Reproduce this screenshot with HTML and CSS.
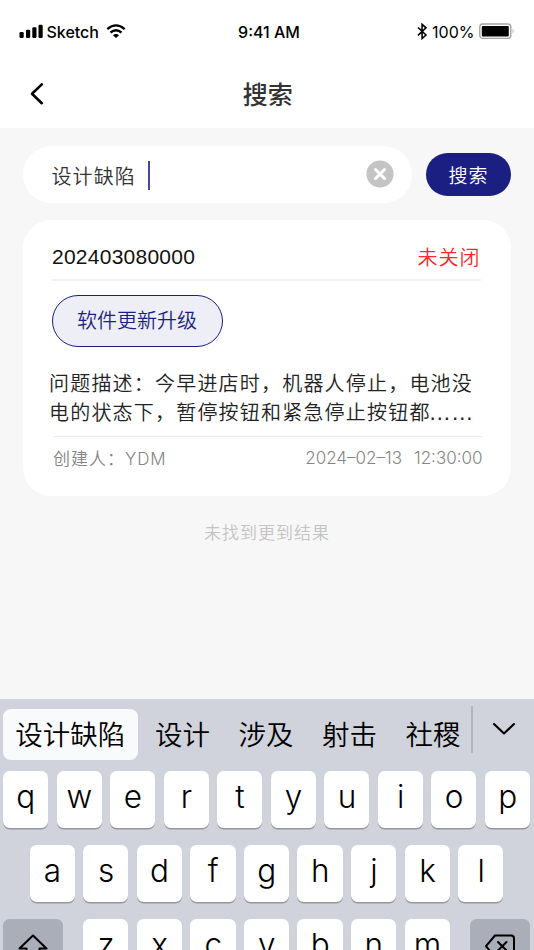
FILE: index.html
```html
<!DOCTYPE html>
<html lang="zh-CN">
<head>
<meta charset="utf-8">
<title>搜索</title>
<link rel="stylesheet" href="styles.css">
</head>
<body>
<div class="screen">
  <header class="top">
    <div class="status">
      <div class="status-left">
        <svg class="signal" width="25" height="15" viewBox="0 0 25 15"><rect x="0.5" y="8" width="4.2" height="6" rx="1.2"/><rect x="7" y="5.7" width="4.2" height="8.3" rx="1.2"/><rect x="13.3" y="3.2" width="4.2" height="10.8" rx="1.2"/><rect x="19.5" y="0.7" width="4.2" height="13.3" rx="1.2"/></svg>
        <span class="carrier">Sketch</span>
        <svg class="wifi" width="20" height="15" viewBox="0 0 20 15"><path d="M1.3 5.2Q10 -2.4 18.7 5.2M4.5 8.5Q10 3.9 15.5 8.5" fill="none" stroke="#000" stroke-width="2.3"/><path d="M6.9 11.2Q10 8.8 13.1 11.2L10 14Z"/></svg>
      </div>
      <span class="time">9:41 AM</span>
      <div class="status-right">
        <svg class="bt" width="11" height="17" viewBox="0 0 11 17"><path d="M1 4.5L9 12L5.1 15.5V1.3L9 4.8L1 12.3" fill="none" stroke="#000" stroke-width="1.6"/></svg>
        <span class="percent">100%</span>
        <svg class="battery" width="36" height="17" viewBox="0 0 36 17"><rect x="0.8" y="1" width="31" height="14.4" rx="3" fill="#fff" stroke="#a3a3a3" stroke-width="1.4"/><rect x="2.8" y="3" width="27" height="10.6" rx="1"/><path d="M33.6 5.8Q35.5 8.2 33.6 10.6Z" fill="#a3a3a3"/></svg>
      </div>
    </div>
    <nav class="nav">
      <svg class="back" width="16" height="24" viewBox="0 0 16 24"><path d="M11.8 2.4L2 11.8L11.8 21.2" fill="none" stroke="#000" stroke-width="2.6" stroke-linecap="round" stroke-linejoin="round"/></svg>
      <h1 class="title">搜索</h1>
    </nav>
  </header>

  <main class="content">
    <div class="search">
      <div class="field">
        <span class="query">设计缺陷</span><i class="caret"></i>
        <svg class="clear" width="28" height="28" viewBox="0 0 28 28"><circle cx="14" cy="14" r="13.6" fill="#c4c4c4"/><path d="M9.5 9.5L18.5 18.5M18.5 9.5L9.5 18.5" stroke="#fff" stroke-width="3" stroke-linecap="round"/></svg>
      </div>
      <button class="submit">搜索</button>
    </div>

    <article class="card">
      <div class="card-head"><span class="number">202403080000</span><span class="state">未关闭</span></div>
      <div class="tag">软件更新升级</div>
      <p class="desc">问题描述：今早进店时，机器人停止，电池没<br>电的状态下，暂停按钮和紧急停止按钮都<span class="more">……</span></p>
      <div class="card-foot"><span class="author">创建人：<span class="name">YDM</span></span><span class="date"><span>2024–02–13</span><span>12:30:00</span></span></div>
    </article>
    <p class="empty">未找到更到结果</p>
  </main>

  <section class="keyboard">
    <div class="candidates">
      <span class="cand active">设计缺陷</span><span class="cand">设计</span><span class="cand">涉及</span><span class="cand">射击</span><span class="cand">社稷</span>
      <i class="split"></i>
      <svg class="expand" width="24" height="14" viewBox="0 0 24 14"><path d="M2 2L12 11.5L22 2" fill="none" stroke="#000" stroke-width="2.1" stroke-linecap="round" stroke-linejoin="round"/></svg>
    </div>
    <div class="row"><span class="key">q</span><span class="key">w</span><span class="key">e</span><span class="key">r</span><span class="key">t</span><span class="key">y</span><span class="key">u</span><span class="key">i</span><span class="key">o</span><span class="key">p</span></div>
    <div class="row"><span class="key">a</span><span class="key">s</span><span class="key">d</span><span class="key">f</span><span class="key">g</span><span class="key">h</span><span class="key">j</span><span class="key">k</span><span class="key">l</span></div>
    <div class="row last">
      <span class="key fn"><svg width="32" height="30" viewBox="0 0 32 30"><path d="M16 2.5L29.5 15.5H22.5V27H9.5V15.5H2.5Z" fill="none" stroke="#000" stroke-width="2" stroke-linejoin="round"/></svg></span>
      <div class="letters"><span class="key">z</span><span class="key">x</span><span class="key">c</span><span class="key">v</span><span class="key">b</span><span class="key">n</span><span class="key">m</span></div>
      <span class="key fn"><svg width="32" height="28" viewBox="0 0 32 28"><path d="M11 2.5H27Q30 2.5 30 5.5V21Q30 24 27 24H11L2 13.2Z M14 9L22.5 17.5M22.5 9L14 17.5" fill="none" stroke="#000" stroke-width="2" stroke-linejoin="round" stroke-linecap="round"/></svg></span>
    </div>
  </section>
</div>
</body>
</html>
```
FILE: styles.css
```css
* { box-sizing: border-box; margin: 0; padding: 0; }
body { font-family: Inter, "Noto Sans CJK SC", sans-serif; background: #f7f7f7; }
svg, i { display: block; flex: none; }
span { white-space: nowrap; }
.screen { width: 534px; height: 950px; overflow: hidden; display: flex; flex-direction: column; background: #f7f7f7; }

.top { height: 128px; background: #fff; flex: none; }
.status { height: 62px; padding: 0 19px; display: grid; grid-template-columns: 1fr auto 1fr; align-items: center; font-size: 16px; line-height: 20px; color: #000; }
.status-left, .status-right { display: flex; align-items: center; }
.status-right { justify-content: flex-end; }
.carrier { margin: 2px 0 0 2.5px; font-size: 16px; font-weight: 500; letter-spacing: 0; }
.wifi { margin-left: 7.5px; }
.time { font-weight: 500; font-size: 16px; letter-spacing: 0; margin: 2px 0 0 4px; }
.bt { margin-right: 4px; }
.percent { letter-spacing: 0; margin-top: 2px; }
.battery { margin-left: 4.5px; }
.nav { height: 66px; display: grid; grid-template-columns: 42px 1fr 42px; align-items: center; }
.back { margin: -2px 0 0 30px; }
.title { text-align: center; font-size: 25px; font-weight: 500; color: #333; line-height: 36px; padding-left: 1.5px; }

.content { flex: none; height: 571px; padding: 17.5px 23px 0; }
.search { display: flex; align-items: center; justify-content: space-between; height: 57px; }
.field { width: 388.5px; height: 57px; border-radius: 29px; background: #fff; display: flex; align-items: center; padding: 0 18px 0 28.5px; }
.query { font-size: 20px; letter-spacing: 1.1px; color: #333; font-weight: 350; padding-top: 2px; }
.caret { width: 2px; height: 29px; margin: 2px 0 0 12px; background: #4446a0; }
.clear { margin-left: auto; }
.submit { width: 85px; height: 43px; border: 0; border-radius: 22px; background: #1b1f82; color: #fff; font: 350 19px/41px "Noto Sans CJK SC", sans-serif; letter-spacing: 1px; }

.card { margin-top: 17px; height: 276px; border-radius: 28px; background: #fff; padding: 14px 29px 0; }
.card-head { height: 47px; border-bottom: 2px solid #f1f1f1; display: flex; align-items: center; justify-content: space-between; margin-right: 1px; }
.number { font-family: "Liberation Sans", sans-serif; font-size: 21px; letter-spacing: 0.25px; color: #111; padding-top: 1px; }
.state { color: #fb2a2a; font-size: 20px; font-weight: 350; letter-spacing: 1px; margin-right: 0.5px; }
.tag { margin-top: 14px; margin-left: -0.5px; width: 171px; height: 52px; border: 1.5px solid #1b1f82; border-radius: 26px; background: #eeeef6; color: #1b1f82; font-size: 20px; font-weight: 350; line-height: 51px; text-align: center; }
.desc { height: 57px; margin: 23.5px -10px 0 -3px; font-size: 20px; font-weight: 350; line-height: 28.5px; letter-spacing: 1.2px; color: #222; white-space: nowrap; }
.more { font-family: "Liberation Sans", sans-serif; font-size: 22.5px; line-height: 1; letter-spacing: 0; margin-left: -2px; }
.card-foot { margin: 8.5px -1px 0 1px; height: 44px; border-top: 1.5px solid #ececec; display: flex; align-items: center; justify-content: space-between; font-size: 17px; font-weight: 300; letter-spacing: 1px; color: #858585; }
.author { margin-top: -1px; font-weight: 350; }
.name { font-weight: 300; letter-spacing: 0.9px; }
.date { display: flex; gap: 12px; letter-spacing: 0; margin-right: 0.5px; }
.empty { margin-top: 24px; text-align: center; font-size: 17px; line-height: 26px; letter-spacing: 1px; font-weight: 350; color: #c3c3c3; }

.keyboard { flex: none; height: 251px; background: #d0d3db; padding: 0 4px 0 3px; }
.candidates { height: 71.5px; padding-top: 10px; display: flex; }
.cand { font-size: 27.5px; font-weight: 350; line-height: 53px; height: 50.5px; margin-right: 28.5px; color: #000; }
.cand.active { width: 134.5px; margin-right: 17.5px; text-align: center; border-radius: 8px; background: #f8fafc; }
.split { width: 2px; height: 47px; margin: -3px 0 0 -18px; background: #b2b5be; }
.expand { margin: 13px 0 0 18.5px; }
.row { display: flex; justify-content: space-between; height: 57px; margin-bottom: 17.2px; }
.row:nth-child(3) { padding: 0 26.6px; }
.key { width: 45.2px; height: 57px; border-radius: 6.5px; background: #fff; box-shadow: 0 1.5px 0 #95989f; text-align: center; font-size: 31.5px; line-height: 52px; font-weight: 350; letter-spacing: -0.5px; color: #000; }
.letters { width: 366.5px; display: flex; justify-content: space-between; }
.fn { width: 60px; background: #aaaeb9; padding-top: 14px; }
.fn svg { margin: 0 auto; }
```
